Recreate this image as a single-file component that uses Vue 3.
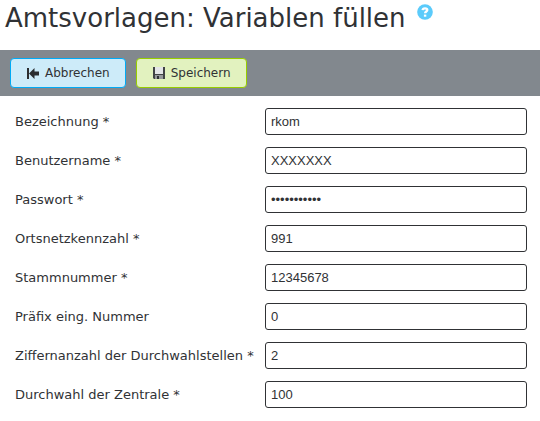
<script setup>
import { ref } from 'vue'

const fields = ref([
  { id: 'bezeichnung', label: 'Bezeichnung *', type: 'text', value: 'rkom' },
  { id: 'benutzername', label: 'Benutzername *', type: 'text', value: 'XXXXXXX' },
  { id: 'passwort', label: 'Passwort *', type: 'password', value: 'abcdefghijk' },
  { id: 'ortsnetz', label: 'Ortsnetzkennzahl *', type: 'text', value: '991' },
  { id: 'stammnummer', label: 'Stammnummer *', type: 'text', value: '12345678' },
  { id: 'praefix', label: 'Präfix eing. Nummer', type: 'text', value: '0' },
  { id: 'ziffern', label: 'Ziffernanzahl der Durchwahlstellen *', type: 'text', value: '2' },
  { id: 'zentrale', label: 'Durchwahl der Zentrale *', type: 'text', value: '100' },
])
</script>

<template>
  <form class="page" @submit.prevent>
    <header class="header">
      <h1 class="title">Amtsvorlagen: Variablen füllen</h1>
      <a class="help" href="#" aria-label="Hilfe">
        <svg width="16" height="16" viewBox="0 0 16 16" aria-hidden="true">
          <circle cx="8" cy="8" r="7.8" fill="#5bcbfb" />
          <path d="M5.6 6.2C5.7 4.8 6.7 4.3 8 4.3c1.4 0 2.3.6 2.3 1.7 0 1.5-2.2 1.6-2.2 3.3" fill="none" stroke="#fff" stroke-width="2.3" />
          <rect x="6.9" y="10.6" width="2.4" height="2.1" fill="#fff" />
        </svg>
      </a>
    </header>
    <div class="toolbar">
      <button class="button cancel" type="button">
        <svg width="14" height="14" viewBox="0 0 14 14" aria-hidden="true">
          <path d="M1 2h2v11H1zM3 7.5L8.5 2v3.5H13v4H8.500V13z" fill="#2b2d30" />
        </svg>
        Abbrechen
      </button>
      <button class="button save" type="submit">
        <svg width="14" height="14" viewBox="0 0 14 14" aria-hidden="true">
          <path d="M1 1h12v12H2l-1-1z" fill="#414345" />
          <path d="M3 1h8v7H3z" fill="#e4e5e7" />
          <path d="M3 9h8v4H3z" fill="#96989b" />
          <path d="M5 10h2v3H5z" fill="#303235" />
        </svg>
        Speichern
      </button>
    </div>
    <div class="fields">
      <div v-for="field in fields" :key="field.id" class="row">
        <label class="label" :for="field.id">{{ field.label }}</label>
        <input :id="field.id" v-model="field.value" class="input" :type="field.type" />
      </div>
    </div>
  </form>
</template>

<style>
body {
  background: #fff;
}
</style>

<style scoped>
.page {
  color: #303235;
  font-family: Verdana, "DejaVu Sans", sans-serif;
}
.header {
  display: flex;
  align-items: flex-start;
  gap: 11px;
  height: 50px;
  padding: 0 5px;
  box-sizing: border-box;
}
.title {
  margin: 0;
  font-size: 26px;
  font-weight: 400;
  line-height: 36px;
  white-space: nowrap;
}
.help {
  display: flex;
  padding-top: 4px;
}
.toolbar {
  display: flex;
  gap: 10px;
  padding: 8px 10px;
  background: #82888e;
}
.button {
  display: flex;
  align-items: center;
  gap: 5px;
  height: 30px;
  padding: 0 15px;
  border: 1px solid;
  border-radius: 4px;
  color: inherit;
  font-family: inherit;
  font-size: 12px;
}
.cancel {
  background: #cdebf9;
  border-color: #00aaf5;
}
.save {
  background: #e2f2bf;
  border-color: #97cd00;
}
.fields {
  display: grid;
  gap: 12px;
  padding: 12px 13px 12px 15px;
}
.row {
  display: grid;
  grid-template-columns: 250px 1fr;
  align-items: center;
}
.label {
  font-size: 13px;
  white-space: nowrap;
}
.input {
  width: 100%;
  min-width: 0;
  height: 27px;
  box-sizing: border-box;
  padding: 0 5px;
  border: 1px solid #303235;
  border-radius: 3px;
  background: #fff;
  color: inherit;
  font-family: Arial, "Liberation Sans", sans-serif;
  font-size: 13px;
}
</style>
